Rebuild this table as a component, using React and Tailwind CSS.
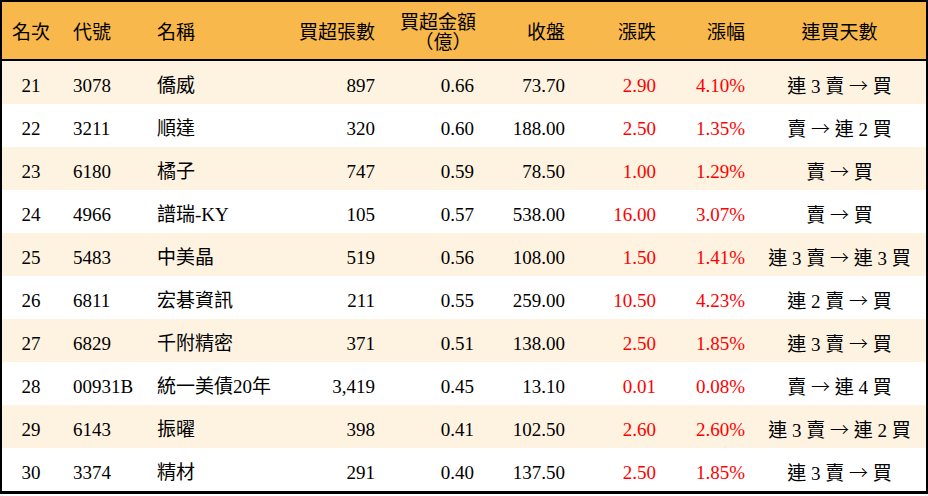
import React from "react";

const rows = [
  ["21", "3078", "僑威", "897", "0.66", "73.70", "2.90", "4.10%", "連 3 賣 → 買"],
  ["22", "3211", "順達", "320", "0.60", "188.00", "2.50", "1.35%", "賣 → 連 2 買"],
  ["23", "6180", "橘子", "747", "0.59", "78.50", "1.00", "1.29%", "賣 → 買"],
  ["24", "4966", "譜瑞-KY", "105", "0.57", "538.00", "16.00", "3.07%", "賣 → 買"],
  ["25", "5483", "中美晶", "519", "0.56", "108.00", "1.50", "1.41%", "連 3 賣 → 連 3 買"],
  ["26", "6811", "宏碁資訊", "211", "0.55", "259.00", "10.50", "4.23%", "連 2 賣 → 買"],
  ["27", "6829", "千附精密", "371", "0.51", "138.00", "2.50", "1.85%", "連 3 賣 → 買"],
  ["28", "00931B", "統一美債20年", "3,419", "0.45", "13.10", "0.01", "0.08%", "賣 → 連 4 買"],
  ["29", "6143", "振曜", "398", "0.41", "102.50", "2.60", "2.60%", "連 3 賣 → 連 2 買"],
  ["30", "3374", "精材", "291", "0.40", "137.50", "2.50", "1.85%", "連 3 賣 → 買"],
];

const grid =
  "grid grid-cols-[58px_80px_140px_95px_99px_91px_91px_89px_181px] items-center";

function Days({ text }) {
  const parts = text.split("→");
  return (
    <>
      {parts[0]}
      <span style={{ fontFamily: "'Noto Sans CJK TC', sans-serif" }} className="font-light">→</span>
      {parts[1]}
    </>
  );
}

export default function App() {
  return (
    <div
      className="w-[928px] h-[496px] bg-white text-black text-[19px] leading-none overflow-hidden"
      style={{ fontFamily: "'Liberation Serif', 'Noto Sans CJK TC', serif" }}
    >
      <div className="w-[928px] border-t-2 border-l-2 border-r-2 border-b-[3px] border-black">
        {/* header */}
        <div className={`${grid} h-[59px] pt-[4px] bg-[#F9B84B] border-b-2 border-black`}>
          <div className="text-center">名次</div>
          <div className="pl-[13px]">代號</div>
          <div className="pl-[17px]">名稱</div>
          <div className="text-right">買超張數</div>
          <div className="flex justify-end">
            <div className="flex flex-col items-center leading-[20px] mr-[-2px]">
              <span>買超金額</span>
              <span className="pl-[10px]">（億）</span>
            </div>
          </div>
          <div className="text-right">收盤</div>
          <div className="text-right">漲跌</div>
          <div className="text-right">漲幅</div>
          <div className="text-center pl-2">連買天數</div>
        </div>
        {/* rows */}
        {rows.map((r, i) => (
          <div
            key={r[0]}
            className={`${grid} h-[43px] pt-[5px] ${i % 2 === 0 ? "bg-[#FEF3E0]" : "bg-white"}`}
          >
            <div className="text-center">{r[0]}</div>
            <div className="pl-[13px]">{r[1]}</div>
            <div className="pl-[17px] whitespace-nowrap">{r[2]}</div>
            <div className="text-right">{r[3]}</div>
            <div className="text-right">{r[4]}</div>
            <div className="text-right">{r[5]}</div>
            <div className="text-right text-[#FF0000]">{r[6]}</div>
            <div className="text-right text-[#FF0000]">{r[7]}</div>
            <div className="text-center pl-2 whitespace-pre">
              <Days text={r[8]} />
            </div>
          </div>
        ))}
      </div>
    </div>
  );
}
